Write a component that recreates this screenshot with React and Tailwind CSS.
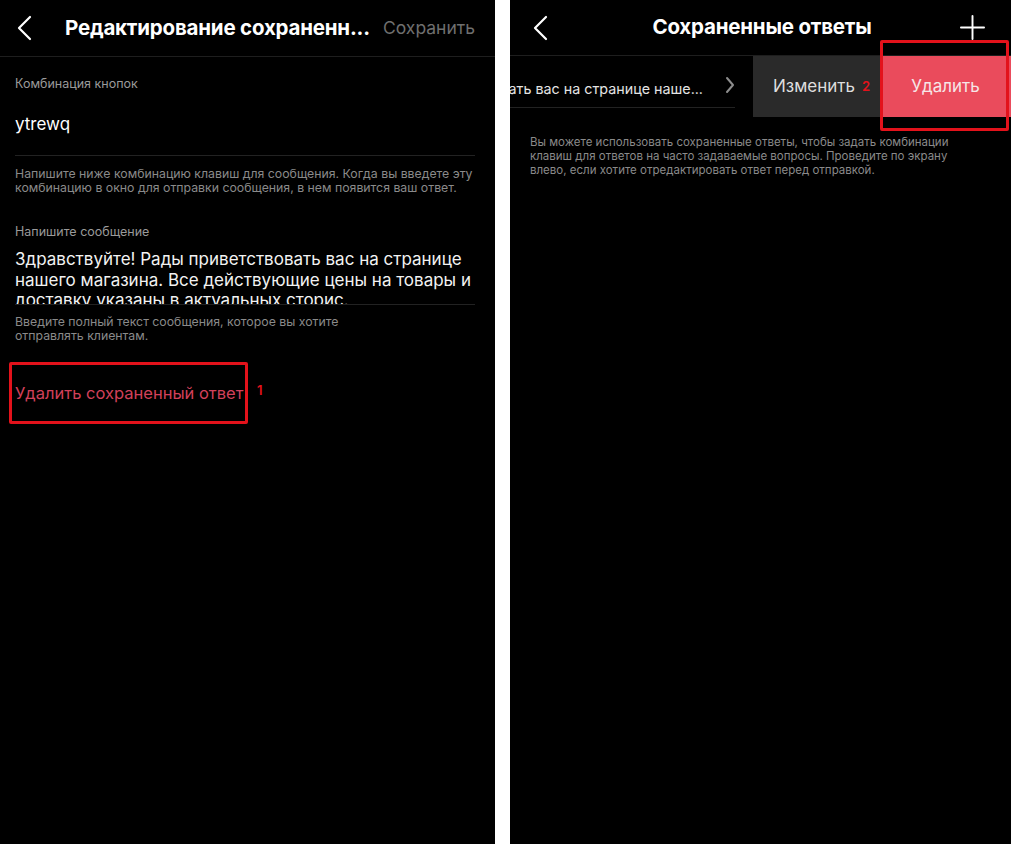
import React from "react";

const font = { fontFamily: "Inter, 'Noto Sans', 'Liberation Sans', sans-serif" };

const BackIcon = ({ className }) => (
  <svg viewBox="0 0 16 26" className={className} fill="none" stroke="currentColor" strokeWidth="2.2" strokeLinecap="round" strokeLinejoin="round">
    <path d="M14 2 L3 13 L14 24" />
  </svg>
);

const PlusIcon = ({ className }) => (
  <svg viewBox="0 0 26 26" className={className} fill="none" stroke="currentColor" strokeWidth="2" strokeLinecap="round">
    <path d="M13 1 V25 M1 13 H25" />
  </svg>
);

const ChevronRight = ({ className }) => (
  <svg viewBox="0 0 10 18" className={className} fill="none" stroke="currentColor" strokeWidth="2" strokeLinecap="round" strokeLinejoin="round">
    <path d="M2 2 L8 9 L2 16" />
  </svg>
);

// left screen: editing a saved reply
const EditScreen = () => (
  <div className="w-[495px] h-full bg-black text-white flex flex-col">
    <div className="h-[57px] flex items-center border-b border-[#1e1e1e] shrink-0">
      <BackIcon className="w-[16px] h-[26px] ml-[16px] text-white" />
      <div className="ml-[33px] text-[20.5px] font-bold tracking-[-0.2px] whitespace-nowrap">
        Редактирование сохраненн...
      </div>
      <div className="ml-auto mr-[20px] text-[17.5px] text-[#6f6f6f]">Сохранить</div>
    </div>

    <div className="pl-[15px] pr-[20px]">
      <div className="pt-[19px] text-[12.5px] leading-[16px] text-[#9a9a9a]">Комбинация кнопок</div>
      <div className="mt-[21px] pb-[20px] text-[17px] leading-[22px] border-b border-[#222]">ytrewq</div>
      <div className="mt-[11px] text-[12.3px] leading-[14px] text-[#8a8a8a] whitespace-nowrap">
        Напишите ниже комбинацию клавиш для сообщения. Когда вы введете эту
        <br />
        комбинацию в окно для отправки сообщения, в нем появится ваш ответ.
      </div>

      <div className="mt-[29px] text-[12.5px] leading-[16px] text-[#9a9a9a]">Напишите сообщение</div>
      <div className="mt-[9px] h-[56px] overflow-hidden border-b border-[#222] text-[17px] leading-[20.5px] text-[#f2f2f2] whitespace-nowrap">
        Здравствуйте! Рады приветствовать вас на странице
        <br />
        нашего магазина. Все действующие цены на товары и
        <br />
        доставку указаны в актуальных сторис.
      </div>
      <div className="mt-[10px] text-[12.3px] leading-[14px] text-[#8a8a8a] whitespace-nowrap">
        Введите полный текст сообщения, которое вы хотите
        <br />
        отправлять клиентам.
      </div>

      <div className="mt-[19px] flex items-center">
        <div className="-ml-[6px] w-[239px] h-[62px] border-[3px] border-[#e3121b] rounded-[2px] flex items-center pl-[3px]">
          <span className="text-[16.5px] text-[#d2405a] whitespace-nowrap">Удалить сохраненный ответ</span>
        </div>
        <span className="ml-[9px] -mt-[4px] text-[13px] font-semibold text-[#e3121b]">1</span>
      </div>
    </div>
  </div>
);

// right screen: list of saved replies with swiped row
const ListScreen = () => (
  <div className="relative flex-1 h-full bg-black text-white flex flex-col">
    <div className="h-[56px] flex items-center border-b border-[#1e1e1e] shrink-0">
      <BackIcon className="w-[16px] h-[26px] ml-[22px] text-white" />
      <div className="flex-1 text-center text-[20.5px] font-bold tracking-[-0.2px] pl-[16px]">Сохраненные ответы</div>
      <PlusIcon className="w-[25px] h-[25px] mr-[26px] text-white" />
    </div>

    <div className="h-[61px] flex shrink-0">
      <div className="w-[243px] flex items-stretch overflow-hidden">
        <div className="flex-1 flex items-center justify-end overflow-hidden border-b border-[#222] mb-[9px] mr-[18px] pt-[14px]">
          <span className="whitespace-nowrap text-[14.3px] text-[#e4e4e4]">
            Здравствуйте! Рады приветствовать вас на странице наше...
          </span>
          <ChevronRight className="w-[10px] h-[18px] ml-[22px] mr-[0px] text-[#8d8d8d] shrink-0 -mt-[7px]" />
        </div>
      </div>
      <div className="w-[127px] bg-[#2a2a2a] flex items-center justify-center pl-[10px]">
        <span className="text-[17px] text-[#dedede]">Изменить</span>
        <span className="ml-[7px] text-[13px] font-semibold text-[#e3121b]">2</span>
      </div>
      <div className="flex-1 bg-[#ea4b5c] flex items-center justify-center">
        <span className="text-[17px] text-[#f6e6e8]">Удалить</span>
      </div>
    </div>

    <div className="mt-[18px] pl-[20px] pr-[20px] text-[11.5px] leading-[14px] text-[#8a8a8a] whitespace-nowrap">
      Вы можете использовать сохраненные ответы, чтобы задать комбинации
      <br />
      клавиш для ответов на часто задаваемые вопросы. Проведите по экрану
      <br />
      влево, если хотите отредактировать ответ перед отправкой.
    </div>

    {/* annotation frame over the delete button */}
    <div className="absolute left-[370px] top-[40px] w-[129px] h-[91px] border-[3px] border-[#e3121b] rounded-[2px]" />
  </div>
);

export default function App() {
  return (
    <div className="w-[1011px] h-[844px] bg-white flex gap-[15px] overflow-hidden" style={font}>
      <EditScreen />
      <ListScreen />
    </div>
  );
}
